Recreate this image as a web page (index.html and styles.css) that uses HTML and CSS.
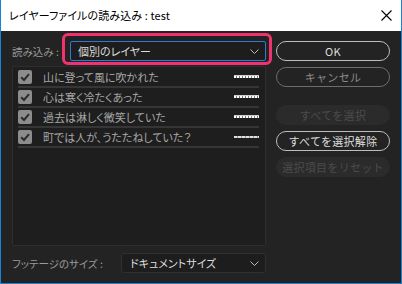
FILE: index.html
```html
<!DOCTYPE html>
<html lang="ja">
<head>
<meta charset="utf-8">
<link rel="stylesheet" href="styles.css">
</head>
<body>
<div class="window">
  <div class="titlebar">
    <span class="title">レイヤーファイルの読み込み : test</span>
    <span class="close">
      <svg width="11" height="11" viewBox="0 0 11 11"><path d="M0.5 0.5 L10.5 10.5 M10.5 0.5 L0.5 10.5" stroke="#000" stroke-width="1.1" fill="none"/></svg>
    </span>
  </div>
  <div class="body">
    <div class="left">
      <div class="row-top">
        <span class="label">読み込み :</span>
        <div class="select select-active">
          <span>個別のレイヤー</span>
          <svg class="chev" width="9" height="5" viewBox="0 0 9 5"><path d="M0.5 0.5 L4.5 4.5 L8.5 0.5" stroke="#bdbdbd" fill="none" stroke-width="1"/></svg>
          <span class="highlight"></span>
        </div>
      </div>
      <div class="list">
        <div class="item"><span class="check"><svg width="14" height="14" viewBox="0 0 14 14"><path d="M3.2 7.2 L6 10 L11 4.2" stroke="#2b2b2b" stroke-width="2" fill="none"/></svg></span><span class="name">山に登って風に吹かれた</span><span class="thumb"></span></div>
        <div class="item"><span class="check"><svg width="14" height="14" viewBox="0 0 14 14"><path d="M3.2 7.2 L6 10 L11 4.2" stroke="#2b2b2b" stroke-width="2" fill="none"/></svg></span><span class="name">心は寒く冷たくあった</span><span class="thumb"></span></div>
        <div class="item"><span class="check"><svg width="14" height="14" viewBox="0 0 14 14"><path d="M3.2 7.2 L6 10 L11 4.2" stroke="#2b2b2b" stroke-width="2" fill="none"/></svg></span><span class="name">過去は淋しく微笑していた</span><span class="thumb"></span></div>
        <div class="item"><span class="check"><svg width="14" height="14" viewBox="0 0 14 14"><path d="M3.2 7.2 L6 10 L11 4.2" stroke="#2b2b2b" stroke-width="2" fill="none"/></svg></span><span class="name">町では人が、うたたねしていた？</span><span class="thumb thumb-light"></span></div>
      </div>
      <div class="row-bottom">
        <span class="label label-wide">フッテージのサイズ :</span>
        <div class="select select-plain">
          <span>ドキュメントサイズ</span>
          <svg class="chev" width="9" height="5" viewBox="0 0 9 5"><path d="M0.5 0.5 L4.5 4.5 L8.5 0.5" stroke="#bdbdbd" fill="none" stroke-width="1"/></svg>
        </div>
      </div>
    </div>
    <div class="right">
      <button class="btn btn-primary">OK</button>
      <button class="btn btn-secondary gap-s">キャンセル</button>
      <button class="btn btn-disabled gap-l">すべてを選択</button>
      <button class="btn btn-primary gap-s">すべてを選択解除</button>
      <button class="btn btn-disabled gap-s">選択項目をリセット</button>
    </div>
  </div>
</div>
</body>
</html>
```

FILE: styles.css
```css
* { box-sizing: border-box; }
html, body { margin: 0; padding: 0; }
body {
  width: 402px;
  height: 284px;
  overflow: hidden;
  font-family: "Noto Sans CJK JP", "Noto Sans", sans-serif;
  font-feature-settings: "palt";
}
.window {
  width: 402px;
  height: 284px;
  border: 1px solid #1883d7;
  border-top: none;
  display: flex;
  flex-direction: column;
  background: #232323;
}
.titlebar {
  height: 31px;
  background: #ffffff;
  display: flex;
  align-items: center;
  justify-content: space-between;
  padding: 0 9px 1px 8px;
}
.title {
  font-size: 11px;
  color: #000;
  line-height: 14px;
  letter-spacing: 0.1px;
}
.close { display: flex; align-items: center; }
.body {
  flex: 1;
  display: flex;
  padding: 10px 10px 10px 11px;
  gap: 10px;
}
.left {
  width: 254px;
  display: flex;
  flex-direction: column;
}
.row-top, .row-bottom {
  display: flex;
  align-items: center;
  height: 20px;
}
.label {
  width: 58px;
  font-size: 10.5px;
  color: #9a9a9a;
  line-height: 14px;
  padding-top: 1px;
}
.label-wide { width: 109px; }
.select {
  position: relative;
  flex: 1;
  height: 20px;
  display: flex;
  align-items: center;
  justify-content: space-between;
  padding: 0 6px 0 7px;
  font-size: 11px;
  line-height: 14px;
  color: #dcdcdc;
  background: #1d1d1d;
  border-radius: 2px;
}
.select-active { border: 1px solid #2d7ad6; }
.select-plain { border: 1px solid #303030; border-radius: 3px; padding-left: 8px; }
.chev { margin-top: 1px; }
.highlight {
  position: absolute;
  left: -9px;
  right: -7px;
  top: -9px;
  bottom: -5px;
  border: 3px solid #f0336e;
  border-radius: 6px;
  pointer-events: none;
}
.list {
  margin-top: 5px;
  height: 180px;
  background: #1e1e1e;
  border: 1px solid #2e2e2e;
  border-radius: 2px;
  padding: 1px 6px 0 5px;
  display: flex;
  flex-direction: column;
}
.item {
  height: 20px;
  display: flex;
  align-items: center;
  border-bottom: 2px solid #363636;
  padding-bottom: 1px;
}
.check {
  width: 14px;
  height: 14px;
  background: #8c8c8c;
  border-radius: 2px;
  display: flex;
}
.name {
  flex: 1;
  margin-left: 11px;
  font-size: 11px;
  line-height: 14px;
  color: #a8a8a8;
}
.thumb {
  width: 25px;
  height: 3px;
  background: repeating-linear-gradient(90deg, #ffffff 0 2px, #7a7a7a 2px 3px);
  border-top: 1px solid #d0d0d0;
}
.thumb-light {
  height: 2px;
  border-top: none;
  background: repeating-linear-gradient(90deg, #e0e0e0 0 3px, #9a9a9a 3px 4px);
}
.row-bottom { margin-top: 7px; }
.right {
  width: 114px;
  display: flex;
  flex-direction: column;
}
.btn {
  height: 20px;
  border-radius: 10px;
  font-family: inherit;
  font-size: 11px;
  line-height: 14px;
  padding: 0;
  background: transparent;
  letter-spacing: 0.3px;
}
.btn-primary { border: 1px solid #bdbdbd; color: #dedede; }
.btn-secondary { border: 1px solid #6d6d6d; color: #8a8a8a; }
.btn-disabled { border: 1px solid #2b2b2b; background: #2b2b2b; color: #4c4c4c; }
.gap-s { margin-top: 6px; }
.gap-l { margin-top: 18px; }
```
